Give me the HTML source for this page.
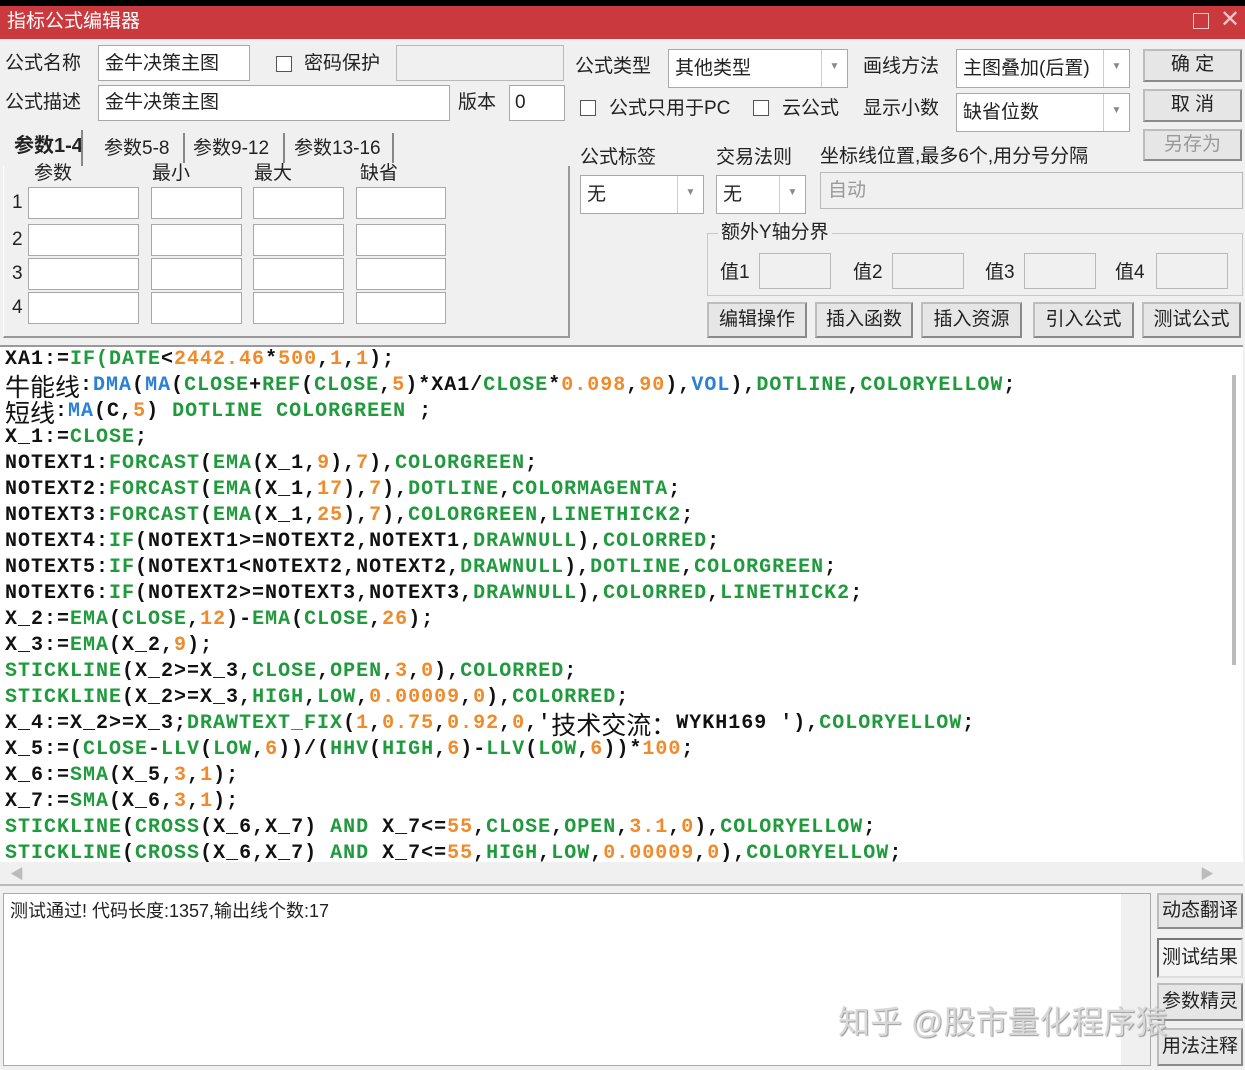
<!DOCTYPE html>
<html><head><meta charset="utf-8"><style>
*{box-sizing:border-box;margin:0;padding:0}
body{width:1245px;height:1070px;background:#f0f0f0;position:relative;overflow:hidden;font-family:"Liberation Sans","Noto Sans CJK SC",sans-serif;font-size:19px;color:#222}
.a{position:absolute}
.in{position:absolute;background:#fff;border:1px solid #a8a8a8}
.dis{position:absolute;background:#f0f0f0;border:1px solid #b8b8b8}
.lb{position:absolute;white-space:nowrap;line-height:24px}
.btn{position:absolute;background:#e6e6e6;border:2px solid #8a8a8a;border-top-color:#bdbdbd;border-left-color:#bdbdbd;text-align:center;line-height:28px;font-size:19px}
.cb{position:absolute;width:16px;height:16px;border:1px solid #555;background:#fff}
.dd{position:absolute;border-left:1px solid #ccc;top:0;bottom:0;width:26px;right:0;color:#888;font-size:10px;text-align:center;line-height:34px}
#code{position:absolute;left:0;top:345px;width:1243px;height:517px;background:#fff;overflow:hidden;border-top:2px solid #999}
.l{position:absolute;left:5px;white-space:pre;font-family:"Liberation Mono",monospace;font-weight:bold;font-size:20px;letter-spacing:1px;line-height:26px;height:26px;color:#111}
.l i{font-style:normal}
.g{color:#1f9a3c}.b{color:#2a7fd6}.o{color:#f08a2a}
.cj{font-family:"Noto Sans CJK SC",sans-serif;font-weight:normal;font-size:25px;letter-spacing:0;display:inline-block;height:26px;line-height:26px;vertical-align:top;overflow:visible}
</style></head><body>
<div class="a" style="left:0;top:0;width:1245px;height:6px;background:#000"></div>
<div class="a" style="left:0;top:6px;width:1245px;height:33px;background:#c9393e"></div>
<div class="lb" style="left:7px;top:10px;color:#fff;font-size:19px">指标公式编辑器</div>
<div class="a" style="left:1193px;top:13px;width:16px;height:16px;border:1.5px solid #f0c8c8"></div>
<div class="lb" style="left:1220px;top:8px;color:#f0c8c8;font-size:24px">✕</div>

<div class="lb" style="left:5px;top:52px">公式名称</div>
<div class="in" style="left:98px;top:45px;width:152px;height:36px"></div>
<div class="lb" style="left:105px;top:52px">金牛决策主图</div>
<div class="cb" style="left:276px;top:56px"></div>
<div class="lb" style="left:304px;top:52px">密码保护</div>
<div class="dis" style="left:396px;top:45px;width:168px;height:36px"></div>
<div class="lb" style="left:5px;top:91px">公式描述</div>
<div class="in" style="left:98px;top:85px;width:352px;height:36px"></div>
<div class="lb" style="left:105px;top:91px">金牛决策主图</div>
<div class="lb" style="left:458px;top:91px">版本</div>
<div class="in" style="left:509px;top:85px;width:56px;height:36px"></div>
<div class="lb" style="left:515px;top:91px">0</div>

<div class="lb" style="left:14px;top:134px;font-size:20px;font-weight:bold">参数1-4</div>
<div class="a" style="left:81px;top:130px;height:36px;border-left:2px solid #888"></div>
<div class="lb" style="left:104px;top:137px">参数5-8</div>
<div class="a" style="left:183px;top:133px;height:30px;border-left:2px solid #888"></div>
<div class="lb" style="left:193px;top:137px">参数9-12</div>
<div class="a" style="left:283px;top:133px;height:30px;border-left:2px solid #888"></div>
<div class="lb" style="left:294px;top:137px">参数13-16</div>
<div class="a" style="left:392px;top:133px;height:30px;border-left:2px solid #888"></div>
<div class="a" style="left:3px;top:166px;width:567px;height:172px;border-right:2px solid #999;border-bottom:2px solid #999;border-left:1px solid #fff"></div>
<div class="lb" style="left:34px;top:162px">参数</div>
<div class="lb" style="left:152px;top:162px">最小</div>
<div class="lb" style="left:254px;top:162px">最大</div>
<div class="lb" style="left:360px;top:162px">缺省</div>
<div class="lb" style="left:12px;top:191px">1</div><div class="lb" style="left:12px;top:228px">2</div><div class="lb" style="left:12px;top:262px">3</div><div class="lb" style="left:12px;top:296px">4</div>
<div class="in" style="left:28px;top:187px;width:111px;height:32px"></div><div class="in" style="left:151px;top:187px;width:91px;height:32px"></div><div class="in" style="left:253px;top:187px;width:91px;height:32px"></div><div class="in" style="left:356px;top:187px;width:90px;height:32px"></div>
<div class="in" style="left:28px;top:224px;width:111px;height:32px"></div><div class="in" style="left:151px;top:224px;width:91px;height:32px"></div><div class="in" style="left:253px;top:224px;width:91px;height:32px"></div><div class="in" style="left:356px;top:224px;width:90px;height:32px"></div>
<div class="in" style="left:28px;top:258px;width:111px;height:32px"></div><div class="in" style="left:151px;top:258px;width:91px;height:32px"></div><div class="in" style="left:253px;top:258px;width:91px;height:32px"></div><div class="in" style="left:356px;top:258px;width:90px;height:32px"></div>
<div class="in" style="left:28px;top:292px;width:111px;height:32px"></div><div class="in" style="left:151px;top:292px;width:91px;height:32px"></div><div class="in" style="left:253px;top:292px;width:91px;height:32px"></div><div class="in" style="left:356px;top:292px;width:90px;height:32px"></div>

<div class="lb" style="left:575px;top:55px">公式类型</div>
<div class="in" style="left:668px;top:49px;width:180px;height:39px"><div class="dd">▼</div></div>
<div class="lb" style="left:675px;top:57px">其他类型</div>
<div class="lb" style="left:863px;top:55px">画线方法</div>
<div class="in" style="left:956px;top:49px;width:174px;height:39px"><div class="dd">▼</div></div>
<div class="lb" style="left:963px;top:57px">主图叠加(后置)</div>
<div class="cb" style="left:580px;top:100px"></div>
<div class="lb" style="left:609px;top:97px">公式只用于PC</div>
<div class="cb" style="left:753px;top:100px"></div>
<div class="lb" style="left:782px;top:97px">云公式</div>
<div class="lb" style="left:863px;top:97px">显示小数</div>
<div class="in" style="left:956px;top:93px;width:174px;height:39px"><div class="dd">▼</div></div>
<div class="lb" style="left:963px;top:101px">缺省位数</div>
<div class="btn" style="left:1143px;top:49px;width:99px;height:33px">确 定</div>
<div class="btn" style="left:1143px;top:89px;width:99px;height:33px">取 消</div>
<div class="btn" style="left:1143px;top:129px;width:99px;height:32px;color:#999">另存为</div>
<div class="lb" style="left:580px;top:146px">公式标签</div>
<div class="lb" style="left:716px;top:146px">交易法则</div>
<div class="lb" style="left:820px;top:145px">坐标线位置,最多6个,用分号分隔</div>
<div class="in" style="left:580px;top:175px;width:124px;height:39px"><div class="dd">▼</div></div>
<div class="lb" style="left:587px;top:183px">无</div>
<div class="in" style="left:716px;top:175px;width:90px;height:39px"><div class="dd">▼</div></div>
<div class="lb" style="left:723px;top:183px">无</div>
<div class="dis" style="left:820px;top:172px;width:423px;height:37px"></div>
<div class="lb" style="left:828px;top:179px;color:#999">自动</div>
<div class="a" style="left:707px;top:233px;width:536px;height:63px;border:1px solid #c8c8c8"></div>
<div class="lb" style="left:718px;top:221px;background:#f0f0f0;padding:0 3px">额外Y轴分界</div>
<div class="lb" style="left:720px;top:261px">值1</div><div class="dis" style="left:759px;top:253px;width:72px;height:36px"></div>
<div class="lb" style="left:853px;top:261px">值2</div><div class="dis" style="left:892px;top:253px;width:72px;height:36px"></div>
<div class="lb" style="left:985px;top:261px">值3</div><div class="dis" style="left:1024px;top:253px;width:72px;height:36px"></div>
<div class="lb" style="left:1115px;top:261px">值4</div><div class="dis" style="left:1156px;top:253px;width:72px;height:36px"></div>
<div class="btn" style="left:707px;top:302px;width:100px;height:36px;line-height:31px">编辑操作</div>
<div class="btn" style="left:815px;top:302px;width:98px;height:36px;line-height:31px">插入函数</div>
<div class="btn" style="left:921px;top:302px;width:101px;height:36px;line-height:31px">插入资源</div>
<div class="btn" style="left:1033px;top:302px;width:101px;height:36px;line-height:31px">引入公式</div>
<div class="btn" style="left:1142px;top:302px;width:99px;height:36px;line-height:31px">测试公式</div>

<div id="code">
<div class="l" style="top:0">XA1:=<i class="g">IF(DATE</i>&lt;<i class="o">2442.46</i>*<i class="o">500</i>,<i class="o">1</i>,<i class="o">1</i>);</div>
<div class="l" style="top:26px"><i class="cj">牛能线</i>:<i class="b">DMA</i>(<i class="b">MA</i>(<i class="g">CLOSE</i>+<i class="g">REF</i>(<i class="g">CLOSE</i>,<i class="o">5</i>)*XA1/<i class="g">CLOSE</i>*<i class="o">0.098</i>,<i class="o">90</i>),<i class="b">VOL</i>),<i class="g">DOTLINE</i>,<i class="g">COLORYELLOW</i>;</div>
<div class="l" style="top:52px"><i class="cj">短线</i>:<i class="b">MA</i>(C,<i class="o">5</i>) <i class="g">DOTLINE COLORGREEN</i> ;</div>
<div class="l" style="top:78px">X_1:=<i class="g">CLOSE</i>;</div>
<div class="l" style="top:104px">NOTEXT1:<i class="g">FORCAST</i>(<i class="g">EMA</i>(X_1,<i class="o">9</i>),<i class="o">7</i>),<i class="g">COLORGREEN</i>;</div>
<div class="l" style="top:130px">NOTEXT2:<i class="g">FORCAST</i>(<i class="g">EMA</i>(X_1,<i class="o">17</i>),<i class="o">7</i>),<i class="g">DOTLINE</i>,<i class="g">COLORMAGENTA</i>;</div>
<div class="l" style="top:156px">NOTEXT3:<i class="g">FORCAST</i>(<i class="g">EMA</i>(X_1,<i class="o">25</i>),<i class="o">7</i>),<i class="g">COLORGREEN</i>,<i class="g">LINETHICK2</i>;</div>
<div class="l" style="top:182px">NOTEXT4:<i class="g">IF</i>(NOTEXT1&gt;=NOTEXT2,NOTEXT1,<i class="g">DRAWNULL</i>),<i class="g">COLORRED</i>;</div>
<div class="l" style="top:208px">NOTEXT5:<i class="g">IF</i>(NOTEXT1&lt;NOTEXT2,NOTEXT2,<i class="g">DRAWNULL</i>),<i class="g">DOTLINE</i>,<i class="g">COLORGREEN</i>;</div>
<div class="l" style="top:234px">NOTEXT6:<i class="g">IF</i>(NOTEXT2&gt;=NOTEXT3,NOTEXT3,<i class="g">DRAWNULL</i>),<i class="g">COLORRED</i>,<i class="g">LINETHICK2</i>;</div>
<div class="l" style="top:260px">X_2:=<i class="g">EMA</i>(<i class="g">CLOSE</i>,<i class="o">12</i>)-<i class="g">EMA</i>(<i class="g">CLOSE</i>,<i class="o">26</i>);</div>
<div class="l" style="top:286px">X_3:=<i class="g">EMA</i>(X_2,<i class="o">9</i>);</div>
<div class="l" style="top:312px"><i class="g">STICKLINE</i>(X_2&gt;=X_3,<i class="g">CLOSE</i>,<i class="g">OPEN</i>,<i class="o">3</i>,<i class="o">0</i>),<i class="g">COLORRED</i>;</div>
<div class="l" style="top:338px"><i class="g">STICKLINE</i>(X_2&gt;=X_3,<i class="g">HIGH</i>,<i class="g">LOW</i>,<i class="o">0.00009</i>,<i class="o">0</i>),<i class="g">COLORRED</i>;</div>
<div class="l" style="top:364px">X_4:=X_2&gt;=X_3;<i class="g">DRAWTEXT_FIX</i>(<i class="o">1</i>,<i class="o">0.75</i>,<i class="o">0.92</i>,<i class="o">0</i>,'<i class="cj">技术交流：</i>WYKH169 '),<i class="g">COLORYELLOW</i>;</div>
<div class="l" style="top:390px">X_5:=(<i class="g">CLOSE</i>-<i class="g">LLV</i>(<i class="g">LOW</i>,<i class="o">6</i>))/(<i class="g">HHV</i>(<i class="g">HIGH</i>,<i class="o">6</i>)-<i class="g">LLV</i>(<i class="g">LOW</i>,<i class="o">6</i>))*<i class="o">100</i>;</div>
<div class="l" style="top:416px">X_6:=<i class="g">SMA</i>(X_5,<i class="o">3</i>,<i class="o">1</i>);</div>
<div class="l" style="top:442px">X_7:=<i class="g">SMA</i>(X_6,<i class="o">3</i>,<i class="o">1</i>);</div>
<div class="l" style="top:468px"><i class="g">STICKLINE</i>(<i class="g">CROSS</i>(X_6,X_7) <i class="g">AND</i> X_7&lt;=<i class="o">55</i>,<i class="g">CLOSE</i>,<i class="g">OPEN</i>,<i class="o">3.1</i>,<i class="o">0</i>),<i class="g">COLORYELLOW</i>;</div>
<div class="l" style="top:494px"><i class="g">STICKLINE</i>(<i class="g">CROSS</i>(X_6,X_7) <i class="g">AND</i> X_7&lt;=<i class="o">55</i>,<i class="g">HIGH</i>,<i class="g">LOW</i>,<i class="o">0.00009</i>,<i class="o">0</i>),<i class="g">COLORYELLOW</i>;</div>
<div class="a" style="left:1232px;top:28px;width:4px;height:290px;background:#bbb"></div>
</div>
<div class="a" style="left:0;top:862px;width:1243px;height:24px;background:#f0f0f0;border-bottom:2px solid #bbb"></div>
<div class="lb" style="left:10px;top:862px;color:#bbb;font-size:14px">◀</div>
<div class="lb" style="left:1200px;top:862px;color:#bbb;font-size:14px">▶</div>
<div class="a" style="left:3px;top:893px;width:1148px;height:173px;background:#fff;border:1px solid #aaa"></div>
<div class="a" style="left:1121px;top:894px;width:29px;height:171px;background:#f0f0f0"></div>
<div class="lb" style="left:10px;top:899px;font-size:18px">测试通过! 代码长度:1357,输出线个数:17</div>
<div class="lb" style="left:838px;top:1000px;font-size:32px;line-height:44px;color:#d8d8d8;text-shadow:1px 1px 1px #999;z-index:5">知乎 @股市量化程序猿</div>
<div class="btn" style="left:1157px;top:893px;width:86px;height:36px;line-height:31px">动态翻译</div>
<div class="btn" style="left:1157px;top:938px;width:86px;height:40px;line-height:35px;border-color:#777 #ddd #ddd #777;background:#f4f4f4">测试结果</div>
<div class="btn" style="left:1157px;top:983px;width:86px;height:38px;line-height:33px">参数精灵</div>
<div class="btn" style="left:1157px;top:1028px;width:86px;height:38px;line-height:33px">用法注释</div>
</body></html>
